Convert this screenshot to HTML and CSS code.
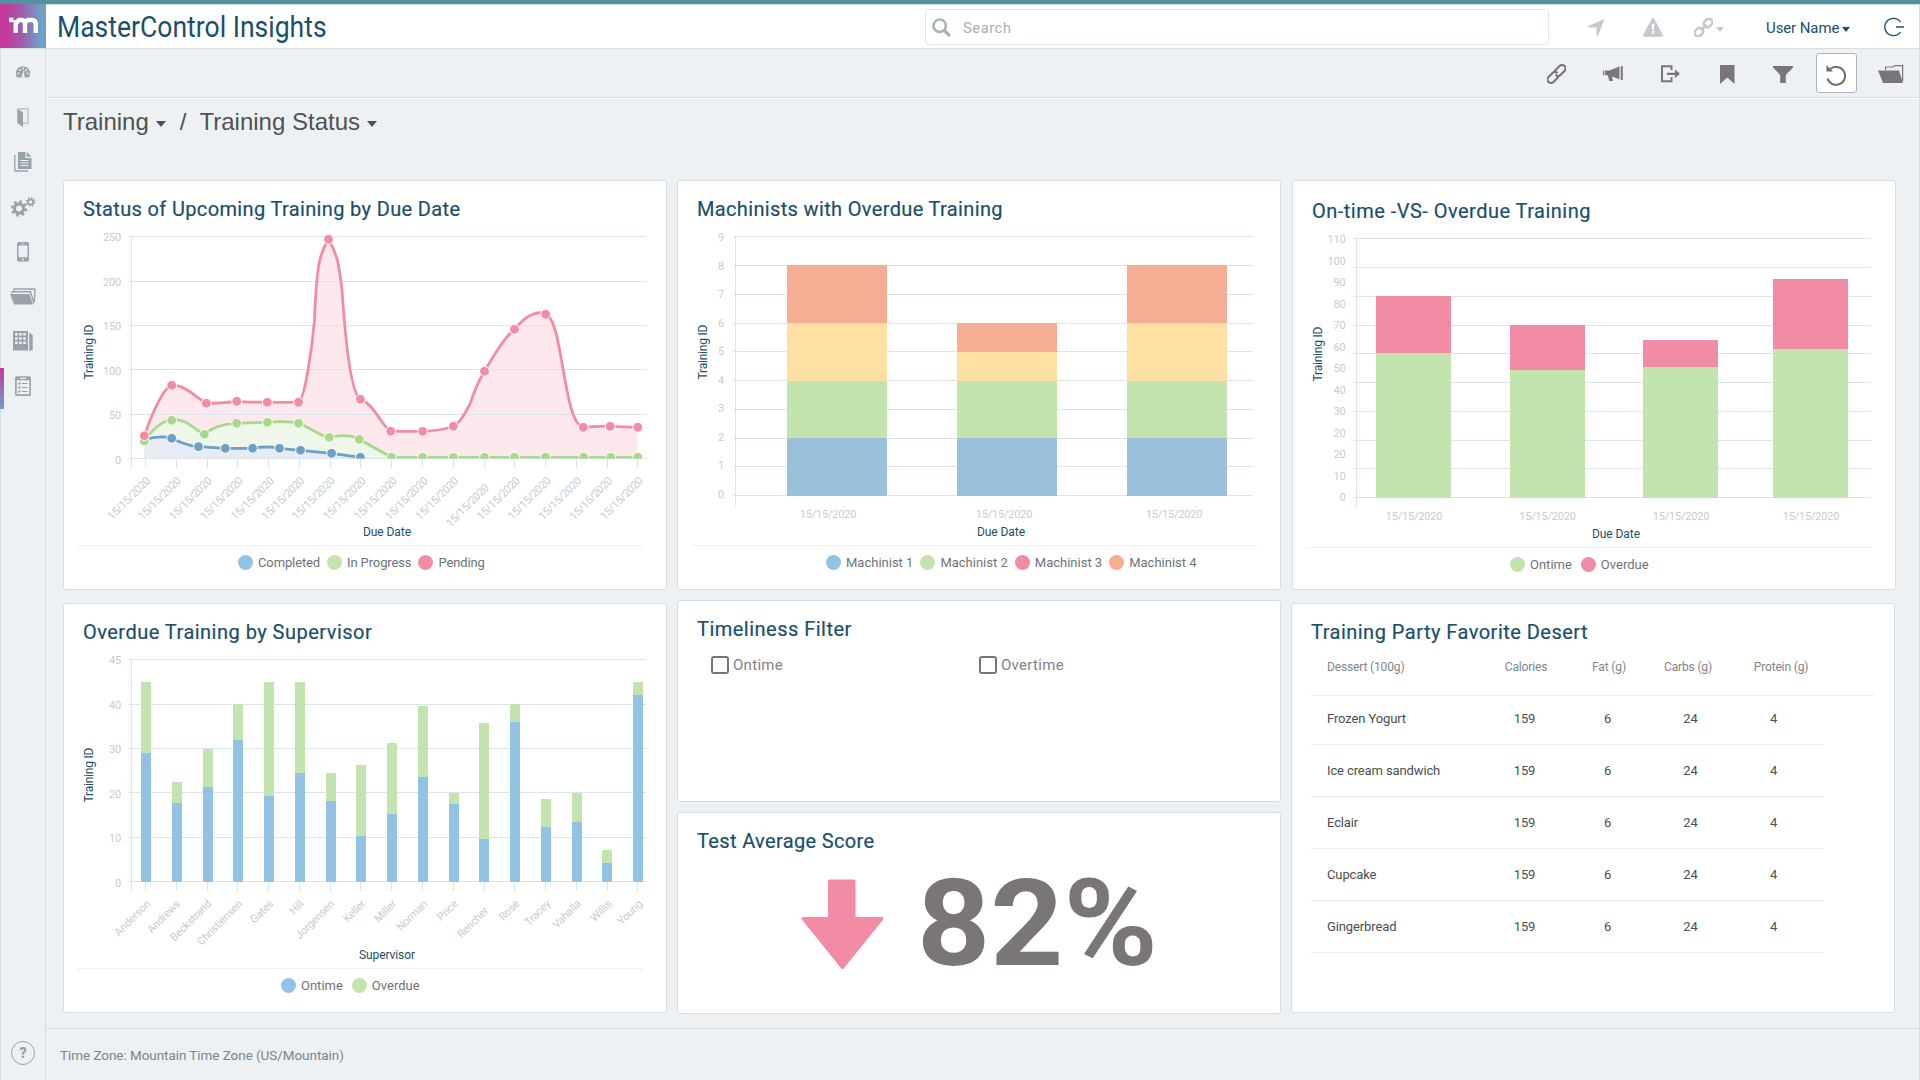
FILE: index.html
```html
<!DOCTYPE html>
<html lang="en">
<head>
    <meta charset="UTF-8">
    <meta name="viewport" content="width=device-width, initial-scale=1.0">
    <title>MasterControl Insights</title>
    <link rel="stylesheet" href="styles.css">
</head>
<body>
    <header class="topbar">
        <div class="logo">
            <svg width="46" height="44" viewBox="0 4 46 44">
                <path fill="#fff" d="M9 17.700h4.500v4.500H9z"/>
                <path fill="none" stroke="#fff" stroke-width="4.400" d="M15.700 33V20M15.700 23.500l3.300-3.500h2.500q3.500 0 3.500 4V33M24.500 23l3.300-3h4q4 0 4 4.500V33"/>
            </svg>
        </div>
        <h1>MasterControl Insights</h1>
        <div class="search">
            <svg width="19" height="19" viewBox="0 0 19 19"><circle cx="7.700" cy="7.700" r="6.200" fill="none" stroke="#a9b3b9" stroke-width="2.600"/><path stroke="#a9b3b9" stroke-width="3.200" stroke-linecap="round" d="M12.800 12.800l4.200 4.200"/></svg>
            <span>Search</span>
        </div>
        <div class="top-icons">
            <svg class="i-send" width="17" height="17" viewBox="0 0 17 17"><path fill="#c3c9ce" d="M16.500 0L9.800 17H8.500V8.600H0V7.300z"/></svg>
            <svg class="i-warn" width="20" height="19" viewBox="0 0 20 19"><path fill="#c3c9ce" d="M10 0q.9 0 1.400 1l8.300 15.800q.8 1.900-1.200 1.900h-17q-2 0-1.200-1.900L8.600 1Q9.100 0 10 0z"/><path fill="#fff" d="M8.700 6h2.600l-.4 5.700H9.100zM8.700 13h2.600v2.600H8.700z"/></svg>
            <svg class="i-link" width="19" height="19" viewBox="0 0 19 19"><g fill="none" stroke="#c3c9ce" stroke-width="2.400" transform="rotate(-45 9.500 9.500)"><rect x="-1.600" y="6" width="9.400" height="7" rx="3.400"/><rect x="11.200" y="6" width="9.400" height="7" rx="3.400"/><path d="M5.500 9.500h8"/></g></svg>
            <i class="caret"></i>
        </div>
        <div class="user">User Name<i class="caret"></i></div>
        <svg class="i-logout" width="20" height="20" viewBox="0 0 20 20"><path fill="none" stroke="#1b4f6b" stroke-width="1.300" d="M16.600 5A8.700 8.700 0 1 0 16.600 15M12 10h8"/></svg>
    </header>

    <div class="page">
        <nav class="sidebar">
            <a><svg width="14" height="12" viewBox="0 0 14 12"><path fill="#97a3aa" d="M1 11.500Q0 9.700 0 7.200a7 7 0 0 1 14 0q0 2.500-1 4.300z"/><g fill="#edf1f4"><circle cx="2.500" cy="7.500" r="1"/><circle cx="4" cy="4" r="1"/><circle cx="7" cy="2.400" r="1"/><circle cx="10.200" cy="4" r="1"/><circle cx="11.600" cy="7.500" r="1"/><path d="M7.600 4.500l1 .3-.7 3.400q1 .6.700 3.300H5.600q-.3-2.300.9-3.300z"/></g></svg></a>
            <a><svg width="12" height="19" viewBox="0 0 12 19"><path fill="none" stroke="#bcc5ca" stroke-width="1.400" d="M1 .8h10v14.400H6"/><path fill="#97a3aa" d="M.3.500L6 4.500V19L.3 15z"/></svg></a>
            <a><svg width="18" height="20" viewBox="0 0 18 20"><path fill="#97a3aa" d="M4 0h7.500v6H17.500v11H4z"/><path fill="#97a3aa" d="M12.700 0l4.800 4.800h-4.800z"/><path fill="none" stroke="#97a3aa" stroke-width="1.300" d="M.8 3v16H14"/><path stroke="#edf1f4" stroke-width="1.100" d="M6.500 8.500h8M6.500 11h8M6.500 13.500h8"/></svg></a>
            <a><svg width="25" height="20" viewBox="0 0 25 20"><g fill="none" stroke="#97a3aa"><circle cx="8" cy="11.500" r="4.600" stroke-width="3.200"/><circle cx="8" cy="11.500" r="7" stroke-width="2.400" stroke-dasharray="2.750 2.750"/><circle cx="19.500" cy="4.900" r="2.600" stroke-width="1.800"/><circle cx="19.500" cy="4.900" r="4.100" stroke-width="1.500" stroke-dasharray="1.600 1.620"/></g></svg></a>
            <a><svg width="12" height="20" viewBox="0 0 12 20"><rect width="12" height="19.500" rx="1.800" fill="#97a3aa"/><path fill="#edf1f4" d="M1.500 3.500h9v11.800h-9zM4.500 1.500h3v.8h-3z"/><circle cx="6" cy="17.400" r="1" fill="#edf1f4"/></svg></a>
            <a><svg width="26" height="17" viewBox="0 0 26 17"><path fill="#97a3aa" d="M0 6h19.500l3.500 10.500H4z"/><path fill="none" stroke="#97a3aa" stroke-width="1.400" d="M2 5.200V3.700h18.500l2.700 8.800.6 3M4 3V1h20.500l.6 1-.9 12"/></svg></a>
            <a><svg width="20" height="20" viewBox="0 0 20 20"><path fill="#97a3aa" d="M0 0h15v19.500H0zM16.200 1.500l3.500 2.500v15.500h-3.500z"/><path fill="#edf1f4" d="M2 2h2.600v2.500H2zm4.100 0h2.600v2.500H6.100zm4.100 0h2.600v2.500h-2.600zM2 6.200h2.600v2.500H2zm4.100 0h2.600v2.500H6.100zm4.100 0h2.600v2.500h-2.600zM2 10.400h2.600v2.500H2zm4.100 0h2.600v2.500H6.100zm4.100 0h2.600v2.500h-2.600z"/></svg></a>
            <a class="active"><svg width="16" height="20" viewBox="0 0 16 20"><rect x=".9" y="1" width="14.200" height="18.200" rx="1" fill="#edf1f4" stroke="#97a3aa" stroke-width="1.700"/><path fill="#97a3aa" d="M1 1h14v3.300H1z"/><path fill="#edf1f4" d="M5 1.800h6v1.200H5z"/><path fill="none" stroke="#97a3aa" stroke-width="1.100" d="M3 7.300l1 .9 1.600-2M7 7.500h5.500M3 11.300l1 .9 1.600-2M7 11.500h5.500M3 15.300l1 .9 1.600-2M7 15.500h5.500"/></svg></a>
            <div class="help">?</div>
        </nav>

        <main>
            <div class="toolbar">
                <svg width="19" height="20" viewBox="0 0 19 20"><g fill="none" stroke="#7a7579" stroke-width="2.100" transform="rotate(-45 9.500 10)"><path d="M9 13.500H1.700a3.500 3.500 0 0 1 0-7h5.700q3.100 0 3.400 3.500"/><path d="M10 6.500h7.300a3.500 3.500 0 0 1 0 7h-5.700q-3.100 0-3.400-3.500"/></g></svg>
                <svg class="i-horn" width="20" height="16" viewBox="0 0 20 16"><path fill="#7a7579" d="M0 4.500h1.300v4.700H0zM2.200 4.500H6.500L16.500.5v12.700L9 10.400l1 4.600H6.300L4.700 9.200H2.200zM17.800 0h2v14h-2z"/></svg>
                <svg class="i-exit" width="19" height="18" viewBox="0 0 19 18"><path fill="none" stroke="#7a7579" stroke-width="2" d="M10.500 5V1.300H1v14.900h9.500v-4"/><path fill="#7a7579" d="M6 7.800h8V4.600L19 8.800 14 13V9.900H6z"/></svg>
                <svg class="i-mark" width="15" height="19" viewBox="0 0 15 19"><path fill="#7a7579" d="M0 0h14.500v19L7.300 12.500 0 19z"/></svg>
                <svg class="i-filter" width="20" height="17" viewBox="0 0 20 17"><path fill="#7a7579" d="M0 0h20v1.500L12.800 9v8H7.200V9L0 1.500z"/></svg>
                <div class="reset"><svg width="21" height="21" viewBox="0 0 21 21"><path fill="none" stroke="#6f6b6e" stroke-width="2" d="M4 4.200A9 9 0 1 1 1.500 13.500"/><path fill="#6f6b6e" d="M.5 0v6.500H7L4.700 4.400 2.500 2.200z"/></svg></div>
                <svg class="i-folder" width="26" height="18" viewBox="0 0 26 18"><path fill="#7a7579" d="M0 5.500h21l4 12.500H5z"/><path fill="none" stroke="#7a7579" stroke-width="1.200" d="M7.600 5V2h7.500l1.500-1.400h8V16"/></svg>
            </div>

            <div class="breadcrumb">
                <span>Training</span><i class="caret"></i><span class="slash">/</span><span>Training Status</span><i class="caret"></i>
            </div>

            <div class="dashboard">
                <div class="column">
                    <section class="card">
                        <h2>Status of Upcoming Training by Due Date</h2>
                        <svg class="chart" width="602" height="324" viewBox="64 221 602 324">
                            <defs>
                                <marker id="dotPink" markerUnits="userSpaceOnUse" markerWidth="12" markerHeight="12" refX="6" refY="6"><circle cx="6" cy="6" r="4.900" fill="#f28ca5" stroke="#fff"/></marker>
                                <marker id="dotGreen" markerUnits="userSpaceOnUse" markerWidth="12" markerHeight="12" refX="6" refY="6"><circle cx="6" cy="6" r="4.900" fill="#a7d98b" stroke="#fff"/></marker>
                                <marker id="dotBlue" markerUnits="userSpaceOnUse" markerWidth="12" markerHeight="12" refX="6" refY="6"><circle cx="6" cy="6" r="4.900" fill="#709fc6" stroke="#fff"/></marker>
                                <clipPath id="plot"><path d="M128 230h520v228.500H128z"/></clipPath>
                            </defs>
                            <!-- areas -->
                            <path fill="#fde8ed" d="M144.400 458V435.700C153 410 165 386 171.700 385.300C184 384 198 399 206.300 403.300C216 403.300 226 402.500 236.700 401.300C247 402.300 257 402.300 267.400 402.300H298.500C304 402 312 350 314.500 320C316.500 265 320 252 328.500 239.300C336 252 339 262 342 290C346 350 352 394 360.400 399.300C374 404 381 425 390.700 431.300H422.600C434 431 445 429.500 453.400 426.300C461 422 465 413 470 404C474 392 479 380 484.500 371.300C494 355 504 338 514.500 329.300C526 315 538 310 545.600 314.300C563 318 563 424 583.300 427.300C592 427 602 425.500 610.200 426.300L637.800 427.300V458z"/>
                            <path fill="#eff7ea" d="M144.400 458V441C152 430 162 420.500 171.700 420.300C185 417 195 430 204.400 434.300C212 427 224 424 236.700 423.300L267.400 422.300C278 421.500 290 421 298.500 423.300C311 428 320 436 329.300 437.300C340 435 350 434 359.200 439.300L391.500 458z"/>
                            <path fill="#e6ecf3" d="M144.400 458V440C153 437 163 436 171.700 438.300C181 443 189 446 198.500 446.700L225.400 448.300H252.600C262 446.500 270 446.500 279.500 448.300L300.500 450.300L331.600 453.300L360.400 458z"/>
                            <path class="grid" d="M128.500 236.500h518M128.500 281.500h518M128.500 325.500h518M128.500 369.500h518M128.500 414.500h518M128.500 458.500h518M131.500 236v232"/>
                            <path class="grid" d="M145.500 459v9M176.500 459v9M207.500 459v9M237.500 459v9M268.500 459v9M299.500 459v9M330.500 459v9M360.500 459v9M391.500 459v9M422.500 459v9M453.500 459v9M484.500 459v9M514.500 459v9M545.500 459v9M576.500 459v9M607.500 459v9M637.500 459v9"/>
                            <!-- lines -->
                            <g class="lines" clip-path="url(#plot)">
                                <path class="blue" d="M144.400 440C153 437 163 436 171.700 438.300C181 443 189 446 198.500 446.700L225.400 448.300H252.600C262 446.500 270 446.500 279.500 448.300L300.500 450.300L331.600 453.300L360.400 457.300"/>
                                <path class="green" d="M144.400 441C152 430 162 420.500 171.700 420.300C185 417 195 430 204.400 434.300C212 427 224 424 236.700 423.300L267.400 422.300C278 421.500 290 421 298.500 423.300C311 428 320 436 329.300 437.300C340 435 350 434 359.200 439.300L391.500 457.300H422.600H453.400H484.500H514.500H545.600H583.700H610.800H637.800"/>
                                <path class="pink" d="M144.400 435.700C153 410 165 386 171.700 385.300C184 384 198 399 206.300 403.300C216 403.300 226 402.500 236.700 401.300C247 402.300 257 402.300 267.400 402.300H298.500C304 402 312 350 314.500 320C316.500 265 320 252 328.500 239.300C336 252 339 262 342 290C346 350 352 394 360.400 399.300C374 404 381 425 390.700 431.300H422.600C434 431 445 429.500 453.400 426.300C461 422 465 413 470 404C474 392 479 380 484.500 371.300C494 355 504 338 514.500 329.300C526 315 538 310 545.600 314.300C563 318 563 424 583.300 427.300C592 427 602 425.500 610.200 426.300L637.800 427.300"/>
                                <path class="dots-blue" d="M171.700 438.300L198.500 446.700L225.400 448.300H252.600H279.500L300.500 450.300L331.600 453.300L360.400 457.300"/>
                                <path class="dots-green" d="M144.400 441L171.700 420.300L204.400 434.300L236.700 423.300L267.400 422.300L298.500 423.300L329.300 437.300L359.200 439.300L391.500 457.300H422.600H453.400H484.500H514.500H545.600H583.700H610.800H637.800"/>
                                <path class="dots-pink" d="M144.400 435.700L171.700 385.300L206.300 403.300L236.700 401.300L267.400 402.300H298.500L328.500 239.300L360.400 399.300L390.700 431.300H422.600L453.400 426.300L484.500 371.300L514.500 329.300L545.600 314.300L583.300 427.300L610.200 426.300L637.800 427.300"/>
                            </g>
                            <g class="tick end">
                                <text x="121" y="241">250</text><text x="121" y="286">200</text><text x="121" y="330">150</text><text x="121" y="375">100</text><text x="121" y="419">50</text><text x="121" y="464">0</text>
                            </g>
                            <g class="tick end slanted">
                                <text transform="translate(151 481.500) rotate(-45)">15/15/2020</text>
                                <text transform="translate(181.500 481.500) rotate(-45)">15/15/2020</text>
                                <text transform="translate(212.500 481.500) rotate(-45)">15/15/2020</text>
                                <text transform="translate(243.500 481.500) rotate(-45)">15/15/2020</text>
                                <text transform="translate(274.500 481.500) rotate(-45)">15/15/2020</text>
                                <text transform="translate(305 481.500) rotate(-45)">15/15/2020</text>
                                <text transform="translate(335.500 481.500) rotate(-45)">15/15/2020</text>
                                <text transform="translate(366.500 481.500) rotate(-45)">15/15/2020</text>
                                <text transform="translate(397.500 481.500) rotate(-45)">15/15/2020</text>
                                <text transform="translate(428.500 481.500) rotate(-45)">15/15/2020</text>
                                <text transform="translate(459 481.500) rotate(-45)">15/15/2020</text>
                                <text transform="translate(489.500 488.500) rotate(-45)">15/15/2020</text>
                                <text transform="translate(520.500 481.500) rotate(-45)">15/15/2020</text>
                                <text transform="translate(551.500 481.500) rotate(-45)">15/15/2020</text>
                                <text transform="translate(582 481.500) rotate(-45)">15/15/2020</text>
                                <text transform="translate(613 481.500) rotate(-45)">15/15/2020</text>
                                <text transform="translate(643.500 481.500) rotate(-45)">15/15/2020</text>
                            </g>
                            <text class="axis" x="387" y="536" textLength="48">Due Date</text>
                            <text class="axis" transform="translate(93 352) rotate(-90)" textLength="55">Training ID</text>
                        </svg>
                        <div class="legend legend-status">
                            <span><b class="c-blue"></b>Completed</span>
                            <span><b class="c-green"></b>In Progress</span>
                            <span><b class="c-pink"></b>Pending</span>
                        </div>
                    </section>

                    <section class="card">
                        <h2 class="wide">Overdue Training by Supervisor</h2>
                        <svg class="chart" width="602" height="324" viewBox="64 644 602 324">
                            <path class="grid" d="M128.500 659.500h518M128.500 704.500h518M128.500 748.500h518M128.500 792.500h518M128.500 837.500h518M128.500 881.500h518M131.500 659v232"/>
                            <path class="grid" d="M145.500 882v9M176.500 882v9M207.500 882v9M237.500 882v9M268.500 882v9M299.500 882v9M330.500 882v9M360.500 882v9M391.500 882v9M422.500 882v9M453.500 882v9M484.500 882v9M514.500 882v9M545.500 882v9M576.500 882v9M607.500 882v9M637.500 882v9"/>
                            <path fill="none" stroke="#c3e4ae" stroke-width="10" d="M146 682v71M177 782v21M208 749v38M238 704v36M269 682v114M300 682v91M331 773v28M361 765v71M392 743v71M423 706v71M454 793v11M484 723v116M515 704v18M546 799v28M577 793v29M607 850v13M638 682v13"/>
                            <path fill="none" stroke="#92c3e5" stroke-width="10" d="M146 753V882M177 803V882M208 787V882M238 740V882M269 796V882M300 773V882M331 801V882M361 836V882M392 814V882M423 777V882M454 804V882M484 839V882M515 722V882M546 827V882M577 822V882M607 863V882M638 695V882"/>
                            <g class="tick end">
                                <text x="121" y="664">45</text><text x="121" y="709">40</text><text x="121" y="753">30</text><text x="121" y="798">20</text><text x="121" y="842">10</text><text x="121" y="887">0</text>
                            </g>
                            <g class="tick end">
                                <text transform="translate(151 904.500) rotate(-45)">Anderson</text>
                                <text transform="translate(181 904.500) rotate(-45)">Andrews</text>
                                <text transform="translate(212 904.500) rotate(-45)">Beckstrand</text>
                                <text transform="translate(243 904.500) rotate(-45)">Christiensen</text>
                                <text transform="translate(274 904.500) rotate(-45)">Gates</text>
                                <text transform="translate(304.500 904.500) rotate(-45)">Hill</text>
                                <text transform="translate(335 904.500) rotate(-45)">Jorgensen</text>
                                <text transform="translate(366 904.500) rotate(-45)">Keller</text>
                                <text transform="translate(397 904.500) rotate(-45)">Miller</text>
                                <text transform="translate(428 904.500) rotate(-45)">Norman</text>
                                <text transform="translate(458.500 904.500) rotate(-45)">Price</text>
                                <text transform="translate(489 911.500) rotate(-45)">Rencher</text>
                                <text transform="translate(520 904.500) rotate(-45)">Rose</text>
                                <text transform="translate(551 904.500) rotate(-45)">Tracey</text>
                                <text transform="translate(581.500 904.500) rotate(-45)">Vahalla</text>
                                <text transform="translate(612.500 904.500) rotate(-45)">Willis</text>
                                <text transform="translate(643 904.500) rotate(-45)">Young</text>
                            </g>
                            <text class="axis" x="387" y="959" textLength="56">Supervisor</text>
                            <text class="axis" transform="translate(93 775) rotate(-90)" textLength="55">Training ID</text>
                        </svg>
                        <div class="legend legend-supervisor">
                            <span><b class="c-blue"></b>Ontime</span>
                            <span><b class="c-green"></b>Overdue</span>
                        </div>
                    </section>
                </div>

                <div class="column column-mid">
                    <section class="card">
                        <h2>Machinists with Overdue Training</h2>
                        <svg class="chart" width="602" height="324" viewBox="678 221 602 324">
                            <path class="grid" d="M733 236.500h520.500M733 265.500h520.500M733 294.500h520.500M733 323.500h520.500M733 351.500h520.500M733 380.500h520.500M733 409.500h520.500M733 438.500h520.500M733 466.500h520.500M733 495.500h520.500M735.500 236v269.500"/>
                            <path fill="#f5ad94" d="M787 265h100v58H787zM957 323h100v29H957zM1127 265h100v58h-100z"/>
                            <path fill="#ffe0a3" d="M787 323h100v58H787zM957 352h100v29H957zM1127 323h100v58h-100z"/>
                            <path fill="#c3e4ae" d="M787 381h100v57H787zM957 381h100v57H957zM1127 381h100v57h-100z"/>
                            <path fill="#9ac0db" d="M787 438h100v58H787zM957 438h100v58H957zM1127 438h100v58h-100z"/>
                            <g class="tick mid">
                                <text x="721" y="241">9</text><text x="721" y="270">8</text><text x="721" y="298">7</text><text x="721" y="327">6</text><text x="721" y="355">5</text><text x="721" y="384">4</text><text x="721" y="412">3</text><text x="721" y="441">2</text><text x="721" y="469">1</text><text x="721" y="498">0</text>
                                <text x="828" y="518">15/15/2020</text><text x="1004" y="518">15/15/2020</text><text x="1174" y="518">15/15/2020</text>
                            </g>
                            <text class="axis" x="1001" y="536" textLength="48">Due Date</text>
                            <text class="axis" transform="translate(707 352) rotate(-90)" textLength="55">Training ID</text>
                        </svg>
                        <div class="legend legend-machinist">
                            <span><b class="c-blue"></b>Machinist 1</span>
                            <span><b class="c-green"></b>Machinist 2</span>
                            <span><b class="c-pink"></b>Machinist 3</span>
                            <span><b class="c-orange"></b>Machinist 4</span>
                        </div>
                    </section>

                    <section class="card card-small">
                        <h2 class="wide">Timeliness Filter</h2>
                        <div class="filters">
                            <label><i class="box"></i>Ontime</label>
                            <label><i class="box"></i>Overtime</label>
                        </div>
                    </section>

                    <section class="card card-small">
                        <h2>Test Average Score</h2>
                        <div class="score">
                            <svg width="84" height="91" viewBox="0 0 84 91"><path fill="#f28ca5" stroke="#f28ca5" stroke-width="3" stroke-linejoin="round" d="M28.500 2h24.500v37.500h28L41.500 88.500 2 39.500H28.500z"/></svg>
                            <span>82%</span>
                        </div>
                    </section>
                </div>

                <div class="column">
                    <section class="card card-ontime">
                        <h2 class="wide">On-time -VS- Overdue Training</h2>
                        <svg class="chart" width="602" height="324" viewBox="1293 223 602 324">
                            <path class="grid" d="M1353.500 238.500H1871M1353.500 267.500H1871M1353.500 296.500H1871M1353.500 325.500H1871M1353.500 353.500H1871M1353.500 382.500H1871M1353.500 411.500H1871M1353.500 440.500H1871M1353.500 468.500H1871M1353.500 497.500H1871M1356.500 238v269.500"/>
                            <path fill="#f28ca5" d="M1376 296h75v57h-75zM1510 325h75v45h-75zM1643 340h75v27h-75zM1773 279h75v70h-75z"/>
                            <path fill="#c3e4ae" d="M1376 353h75v145h-75zM1510 370h75v128h-75zM1643 367h75v131h-75zM1773 349h75v149h-75z"/>
                            <g class="tick end">
                                <text x="1345.500" y="243">110</text><text x="1345.500" y="265">100</text><text x="1345.500" y="286">90</text><text x="1345.500" y="308">80</text><text x="1345.500" y="329">70</text><text x="1345.500" y="351">60</text><text x="1345.500" y="372">50</text><text x="1345.500" y="394">40</text><text x="1345.500" y="415">30</text><text x="1345.500" y="437">20</text><text x="1345.500" y="458">20</text><text x="1345.500" y="480">10</text><text x="1345.500" y="501">0</text>
                            </g>
                            <g class="tick mid">
                                <text x="1414" y="520">15/15/2020</text><text x="1547.500" y="520">15/15/2020</text><text x="1681" y="520">15/15/2020</text><text x="1811" y="520">15/15/2020</text>
                            </g>
                            <text class="axis" x="1616" y="538" textLength="48">Due Date</text>
                            <text class="axis" transform="translate(1322 354) rotate(-90)" textLength="55">Training ID</text>
                        </svg>
                        <div class="legend legend-ontime">
                            <span><b class="c-green"></b>Ontime</span>
                            <span><b class="c-pink"></b>Overdue</span>
                        </div>
                    </section>

                    <section class="card">
                        <h2 class="wide">Training Party Favorite Desert</h2>
                        <div class="table-head"><span>Dessert (100g)</span><span>Calories</span><span>Fat (g)</span><span>Carbs (g)</span><span>Protein (g)</span></div>
                        <div class="table-body">
                            <div class="row"><span>Frozen Yogurt</span><span>159</span><span>6</span><span>24</span><span>4</span></div>
                            <div class="row"><span>Ice cream sandwich</span><span>159</span><span>6</span><span>24</span><span>4</span></div>
                            <div class="row"><span>Eclair</span><span>159</span><span>6</span><span>24</span><span>4</span></div>
                            <div class="row"><span>Cupcake</span><span>159</span><span>6</span><span>24</span><span>4</span></div>
                            <div class="row"><span>Gingerbread</span><span>159</span><span>6</span><span>24</span><span>4</span></div>
                        </div>
                    </section>
                </div>
            </div>

            <footer>Time Zone: Mountain Time Zone (US/Mountain)</footer>
        </main>
    </div>
</body>
</html>
```
FILE: styles.css
```css
* {
    box-sizing: border-box;
}
body {
    margin: 0;
    height: 1080px;
    display: flex;
    flex-direction: column;
    overflow: hidden;
    border-top: 4px solid #5391a0;
    background-color: #edf1f4;
    font-family: Roboto, "Liberation Sans", sans-serif;
    color: #4a4d50;
}
svg {
    display: block;
    flex: none;
}

/* top bar */
.topbar {
    display: flex;
    align-items: center;
    height: 45px;
    background-color: white;
    border-bottom: 1px solid #d5dee1;
    border-right: 1px solid #d5dee1;
    box-shadow: inset 0 1px 0 #d5dee1;
}
.logo {
    width: 46px;
    height: 44px;
    background: linear-gradient(90deg, #c4399c 15%, #9a62ae 50%, #709fc6 88%);
}
h1 {
    width: 868px;
    margin: 0 0 0 11px;
    padding-top: 2px;
    font-size: 29px;
    font-weight: 400;
    line-height: 42px;
    color: #1b4f6b;
    transform: scaleX(0.915);
    transform-origin: left;
    white-space: nowrap;
}
.search,
.top-icons,
.user,
.i-logout {
    margin-top: 2px;
}
.search {
    display: flex;
    align-items: center;
    gap: 12px;
    width: 624px;
    height: 36px;
    padding-left: 6px;
    border: 1px solid #dfe6ea;
    border-radius: 4px;
    font-size: 15px;
    color: #a9b1b6;
}
.search span {
    padding-top: 2px;
    letter-spacing: 0.4px;
}
.top-icons {
    display: flex;
    align-items: center;
    width: 217px;
    padding-left: 39px;
}
.i-warn {
    margin-left: 38px;
}
.i-link {
    margin: 0 3px 0 31px;
}
.caret {
    border: solid transparent;
    border-width: 5px 4px 0;
    border-top-color: #1b4f6b;
}
.top-icons .caret {
    margin-top: 4px;
    border-top-color: #c3c9ce;
}
.user {
    display: flex;
    align-items: center;
    gap: 3px;
    width: 118px;
    font-size: 15px;
    letter-spacing: -0.1px;
    color: #1b4f6b;
    padding-top: 1px;
}
.user .caret {
    margin-top: 3px;
    border-width: 5px 4.5px 0;
}

/* sidebar */
.page {
    display: flex;
    flex: 1;
}
.sidebar {
    display: flex;
    flex-direction: column;
    width: 46px;
    padding: 1px 0 12px;
    border: 1px solid #d5dee1;
    border-top: none;
}
.sidebar a {
    display: flex;
    align-items: center;
    justify-content: center;
    height: 44.8px;
}
.sidebar .active {
    position: relative;
}
.sidebar .active::before {
    content: "";
    position: absolute;
    left: -1px;
    top: 4px;
    width: 4px;
    height: 41px;
    background: linear-gradient(#c4399c, #709fc6);
}
.help {
    width: 24px;
    height: 24px;
    margin: auto auto 2px;
    border: 1px solid #97a3aa;
    border-radius: 50%;
    font-size: 14px;
    font-weight: 900;
    line-height: 22px;
    text-align: center;
    color: #97a3aa;
    transform: translateY(-2px);
}

/* main area */
main {
    display: flex;
    flex-direction: column;
    flex: 1;
    border-right: 1px solid #d5dee1;
}
.toolbar {
    display: flex;
    align-items: center;
    justify-content: flex-end;
    height: 49px;
    padding: 2px 15px 0 0;
    border-bottom: 1px solid #d5dee1;
    box-shadow: 0 1px 0 white;
}
.i-horn {
    margin-left: 37px;
}
.i-exit {
    margin-left: 38px;
}
.i-mark {
    margin-left: 40px;
}
.i-filter {
    margin-left: 38px;
}
.reset {
    display: flex;
    align-items: center;
    justify-content: center;
    width: 41px;
    height: 40px;
    margin: -2px 21px 0 23px;
    padding-top: 4px;
    background-color: white;
    border: 1px solid #aab5bb;
    border-radius: 3px;
}
.breadcrumb {
    display: flex;
    height: 82px;
    padding: 10px 0 0 17px;
    font-family: "Liberation Sans", Arial, sans-serif;
    font-size: 24px;
    line-height: 28px;
    color: #505150;
}
.breadcrumb .caret {
    align-self: flex-start;
    margin: 13px 0 0 7px;
    border-width: 6px 5px 0;
    border-top-color: #505150;
}
.slash {
    margin: 0 13px 0 14px;
}

/* dashboard cards */
.dashboard {
    display: flex;
    gap: 10px;
    height: 848px;
    padding-left: 17px;
}
.column {
    display: flex;
    flex-direction: column;
    gap: 13px;
    width: 604px;
}
.column-mid {
    gap: 10px;
}
.card {
    height: 410px;
    background-color: white;
    border: 1px solid #d5dee1;
    border-radius: 3px;
}
.card-small {
    height: 202px;
}
.card-ontime {
    width: 604px;
    margin-left: 1px;
}
.card h2 {
    margin: 0;
    padding: 16px 0 0 19px;
    font-size: 20px;
    font-weight: 400;
    line-height: 24px;
    letter-spacing: 0.35px;
    color: #1b4f6b;
    -webkit-text-stroke: 0.2px #1b4f6b;
    white-space: nowrap;
}
.card .wide {
    letter-spacing: 0.48px;
}
.card-ontime h2 {
    padding-top: 18px;
}

/* charts */
.grid {
    fill: none;
    stroke: #dbe5f0;
}
.tick {
    font-size: 11px;
    fill: #c6ccd0;
    letter-spacing: -0.2px;
}
.slanted {
    letter-spacing: -0.35px;
}
.end {
    text-anchor: end;
}
.mid {
    text-anchor: middle;
}
.axis {
    font-size: 12px;
    fill: #1b4f6b;
    text-anchor: middle;
}
.lines path {
    fill: none;
    stroke-width: 2.8;
}
.lines .blue {
    stroke: #709fc6;
}
.lines .green {
    stroke: #a7d98b;
}
.lines .pink {
    stroke: #f28ca5;
}
.dots-blue {
    marker: url(#dotBlue);
}
.dots-green {
    marker: url(#dotGreen);
}
.dots-pink {
    marker: url(#dotPink);
}
.legend {
    display: flex;
    gap: 6px;
    height: 33px;
    margin: 0 23px 0 13px;
    border-top: 1px solid #eef1f3;
    font-size: 13px;
    color: #6f7377;
}
.legend span {
    display: flex;
    align-items: center;
    gap: 5px;
    white-space: nowrap;
}
.legend b {
    width: 15px;
    height: 15px;
    border-radius: 50%;
}
.legend-status {
    gap: 7px;
    padding-left: 161px;
    letter-spacing: -0.12px;
}
.legend-supervisor {
    gap: 9px;
    padding-left: 204px;
}
.legend-machinist {
    gap: 7px;
    padding-left: 135px;
}
.legend-ontime {
    gap: 9px;
    padding-left: 204px;
}
.c-blue {
    background-color: #92c3e5;
}
.c-green {
    background-color: #c3e4ae;
}
.c-pink {
    background-color: #f28ca5;
}
.c-orange {
    background-color: #f5ad94;
}

/* timeliness filter */
.filters {
    display: flex;
    padding: 15px 0 0 33px;
}
.filters label {
    display: flex;
    align-items: center;
    gap: 4px;
    width: 268px;
    height: 18px;
    font-size: 15px;
    line-height: 20px;
    letter-spacing: 0.3px;
    color: #7f8286;
}
.box {
    width: 18px;
    height: 18px;
    border: 2px solid #7a7579;
    border-radius: 3px;
}

/* average score */
.score {
    display: flex;
    gap: 32px;
    padding: 26px 0 0 123px;
}
.score span {
    font-size: 121px;
    font-weight: 700;
    line-height: 90px;
    color: #7a7579;
    transform: scaleX(1.055);
    transform-origin: left;
}

/* dessert table */
.table-head {
    display: grid;
    grid-template-columns: 172px 86px 80px 78px 108px;
    height: 52px;
    margin: 0 20px 0 19px;
    padding-top: 16px;
    border-bottom: 1px solid #e6ecf0;
    font-size: 12px;
    letter-spacing: -0.15px;
    color: #80868a;
    text-align: center;
}
.table-body {
    width: 513px;
    margin: -3px 0 0 19px;
}
.row {
    display: grid;
    grid-template-columns: 172px repeat(4, 83px);
    align-items: center;
    height: 52px;
    padding-bottom: 1px;
    border-bottom: 1px solid #eceff0;
    font-size: 13px;
    letter-spacing: -0.12px;
    text-align: center;
}
.table-head span:first-child,
.row span:first-child {
    padding-left: 16px;
    text-align: left;
}

footer {
    flex: 1;
    padding-left: 14px;
    border-top: 1px solid #d5dee1;
    border-bottom: 1px solid #d5dee1;
    font-size: 13.5px;
    line-height: 52px;
    letter-spacing: -0.06px;
    color: #7d8488;
}
```
